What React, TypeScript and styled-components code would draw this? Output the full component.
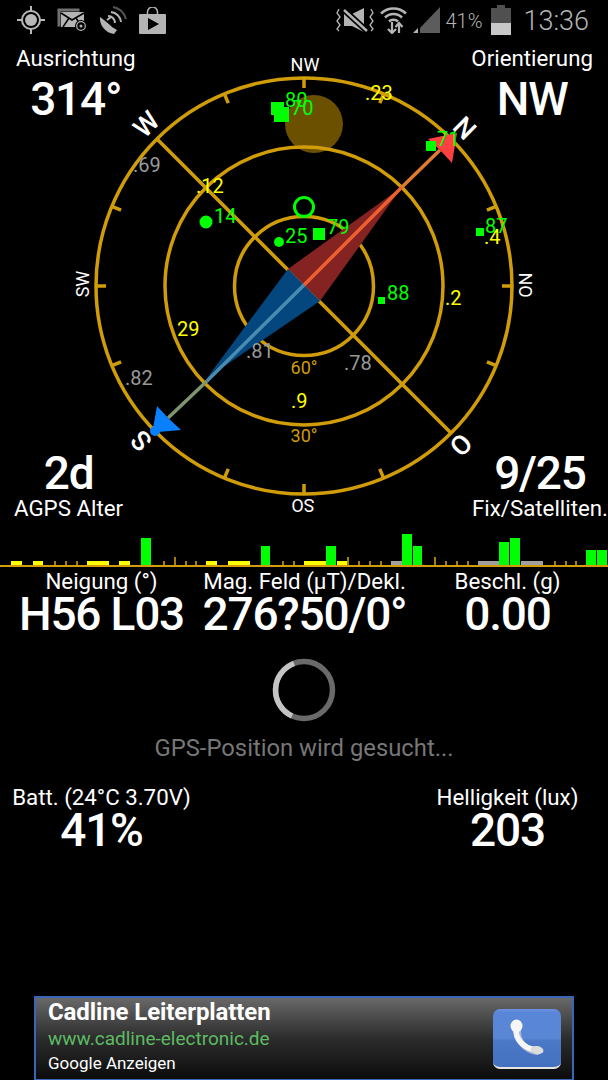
import React from 'react';
import styled, { createGlobalStyle } from 'styled-components';

const GOLD = '#d09c08';
const SAT_GREEN = '#00ff00';

const GlobalStyle = createGlobalStyle`
  html, body {
    margin: 0;
    padding: 0;
    background: #000;
  }
  body {
    font-family: Roboto, "Liberation Sans", sans-serif;
    color: #fff;
  }
`;

const Screen = styled.div`
  width: 608px;
  height: 1080px;
  background: #000;
  display: flex;
  flex-direction: column;
  overflow: hidden;
`;

const StatusBar = styled.div`
  height: 40px;
  flex: none;
  display: flex;
  align-items: center;
  justify-content: space-between;
  padding: 0 19px 0 17px;
  box-sizing: border-box;
  color: #b4b4b4;
`;

const IconGroup = styled.div<{ $gap: number }>`
  display: flex;
  align-items: center;
  gap: ${p => p.$gap}px;
`;

const Percent = styled.span`
  font-size: 20px;
  font-weight: 300;
  margin: 2px 3px 0 -1px;
`;

const Clock = styled.span`
  font-size: 27px;
  font-weight: 300;
  margin: 2px 0 0 6px;
`;

const Gauge = styled.section`
  position: relative;
  height: 485px;
  flex: none;
  display: flex;
  flex-direction: column;
  justify-content: space-between;
`;

const CompassSvg = styled.svg`
  position: absolute;
  left: 0;
  top: 0;
  font-family: Roboto, sans-serif;
`;

const CornerRow = styled.div<{ $left: number; $right: number; $top: number; $bottom: number }>`
  position: relative;
  display: flex;
  justify-content: space-between;
  padding: ${p => p.$top}px ${p => p.$right}px ${p => p.$bottom}px ${p => p.$left}px;
`;

const Stat = styled.div<{ $gap?: number }>`
  display: flex;
  flex-direction: column;
  align-items: center;
  gap: ${p => p.$gap ?? 0}px;
`;

const Label = styled.div`
  font-size: 22.3px;
  line-height: 26px;
  white-space: nowrap;
`;

const Value = styled.div<{ $line: number }>`
  font-size: 46px;
  font-weight: 500;
  line-height: ${p => p.$line}px;
  letter-spacing: -1.2px;
  white-space: nowrap;
`;

const SlotRow = styled.div`
  height: 40px;
  flex: none;
  display: grid;
  grid-template-columns: repeat(56, 1fr);
  align-items: end;
  border-bottom: 2px solid ${GOLD};
`;

const Slot = styled.div<{ $h: number; $color?: string; $tick?: boolean; $gapped?: boolean }>`
  box-sizing: border-box;
  height: ${p => p.$h}px;
  background: ${p => p.$color ?? 'transparent'};
  ${p => (p.$tick ? `border-left: 2px solid #a87e08;` : '')}
  ${p => (p.$gapped ? 'border-right: 1px solid #000;' : '')}
`;

const StatGrid = styled.div<{ $top: number }>`
  display: grid;
  grid-template-columns: repeat(3, 203px);
  margin-top: ${p => p.$top}px;
  justify-items: center;
`;

const Searching = styled.div`
  display: flex;
  flex-direction: column;
  align-items: center;
  margin-top: 23px;
  gap: 11px;
`;

const SearchText = styled.div`
  font-size: 23.8px;
  line-height: 28px;
  color: #777;
`;

const AdBanner = styled.aside`
  margin: auto 34px 0;
  height: 84px;
  box-sizing: border-box;
  border: 2px solid #3a66b8;
  border-bottom-width: 1px;
  background: linear-gradient(#686868 0%, #2c2c2c 50%, #0c0c0c 100%);
  display: flex;
  align-items: center;
  justify-content: space-between;
  padding: 0 11px 0 12px;
`;

const AdText = styled.div`
  display: flex;
  flex-direction: column;
  margin-top: -5px;
`;

const AdTitle = styled.div`
  font-size: 24px;
  font-weight: 700;
  line-height: 28px;
  letter-spacing: -0.1px;
`;

const AdUrl = styled.div`
  font-size: 19px;
  line-height: 26px;
  color: #5dbb63;
`;

const AdNote = styled.div`
  font-size: 17px;
  line-height: 23px;
`;

const CallButton = styled.div`
  width: 68px;
  height: 60px;
  border-radius: 7px;
  background: linear-gradient(#6a93e0 0%, #5a86d8 6%, #5a86d6 50%, #4c78c8 55%, #4470c0 100%);
  border-bottom: 2px solid #e4e4e4;
  box-sizing: border-box;
  display: flex;
  align-items: center;
  justify-content: center;
`;

// signal bars along the strip: 56 slots, one per satellite id
type SlotData = { h: number; color?: string; tick?: boolean };
const Y = '#ffff00';
const G = SAT_GREEN;
const A = '#a0a0a0';
const t = (h = 4): SlotData => ({ h, tick: true });
const bar = (h: number, color: string): SlotData => ({ h, color });
const e: SlotData = { h: 0 };
const slots: SlotData[] = [
  e, bar(4, Y), e, bar(4, Y), e, t(), t(), t(), bar(4, Y), bar(4, Y),
  e, bar(4, Y), e, bar(27, G), e, t(), t(8), t(), t(), bar(4, Y),
  e, bar(4, Y), bar(4, Y), e, bar(19, G), e, t(), t(), bar(4, Y), bar(4, Y),
  bar(19, G), bar(4, Y), t(8), t(), t(), t(), bar(4, A), bar(31, G), bar(19, G), e,
  t(8), t(), t(), t(), bar(4, A), bar(4, A), bar(23, G), bar(27, G), bar(4, A), bar(4, A),
  e, t(), t(), t(), bar(15, G), bar(15, G),
];

type Mark = { x: number; y: number; text: string; color?: string };
const marks: Mark[] = [
  { x: 285, y: 107, text: '80', color: G },
  { x: 291, y: 115, text: '70', color: G },
  { x: 437, y: 146, text: '71', color: G },
  { x: 485, y: 233, text: '87', color: G },
  { x: 327, y: 234, text: '79', color: G },
  { x: 285, y: 243, text: '25', color: G },
  { x: 214, y: 223, text: '14', color: G },
  { x: 387, y: 300, text: '88', color: G },
  { x: 196, y: 193, text: '.12', color: Y },
  { x: 365, y: 100, text: '.23', color: Y },
  { x: 177, y: 336, text: '29', color: Y },
  { x: 445, y: 305, text: '.2', color: Y },
  { x: 291, y: 408, text: '.9', color: Y },
  { x: 484, y: 244, text: '.4', color: Y },
  { x: 133, y: 172, text: '.69', color: '#999' },
  { x: 125, y: 385, text: '.82', color: '#999' },
  { x: 246, y: 358, text: '.81', color: '#999' },
  { x: 344, y: 370, text: '.78', color: '#999' },
];

const squares = [
  { x: 271, y: 102, s: 13 },
  { x: 274, y: 107, s: 15 },
  { x: 426, y: 141, s: 10 },
  { x: 476, y: 228, s: 8 },
  { x: 313, y: 228, s: 12 },
  { x: 378, y: 297, s: 7 },
];

const CX = 304;
const CY = 286;
const tickAngles = [0, 22.5, 67.5, 90, 112.5, 157.5, 180, 202.5, 247.5, 270, 292.5, 337.5];

const directions = [
  { text: 'NW', x: 305, y: 71, rot: 0, size: 18 },
  { text: 'NO', x: 525, y: 285, rot: 90, size: 18 },
  { text: 'SO', x: 303, y: 505, rot: 180, size: 18 },
  { text: 'SW', x: 83, y: 284, rot: -90, size: 18 },
  { text: 'N', x: 465, y: 128, rot: 45, size: 27 },
  { text: 'O', x: 461, y: 445, rot: 135, size: 27 },
  { text: 'S', x: 141, y: 441, rot: -135, size: 27 },
  { text: 'W', x: 146, y: 124, rot: -45, size: 27 },
];

const Compass = () => (
  <CompassSvg width="608" height="485" viewBox="0 40 608 485">
    <circle cx="314" cy="124" r="29" fill="#6b5000" />
    <g fill="none" stroke={GOLD} strokeWidth="3.5">
      <circle cx={CX} cy={CY} r="208" />
      <circle cx={CX} cy={CY} r="139" />
      <circle cx={CX} cy={CY} r="69.5" />
      <line x1="157" y1="139" x2="451" y2="433" />
      {tickAngles.map(a => (
        <line key={a} x1={CX} y1={CY - 208} x2={CX} y2={CY - 198} transform={`rotate(${a} ${CX} ${CY})`} />
      ))}
    </g>
    <polygon points="402,187 288,269 304,285" fill="#852222" />
    <polygon points="402,187 320,301 304,285" fill="#852222" />
    <polygon points="207,378 288,269 304,285" fill="#04477f" />
    <polygon points="207,378 320,301 304,285" fill="#04477f" />
    <line x1="440" y1="150" x2="402" y2="187" stroke="#e07a30" strokeWidth="3.5" />
    <line x1="402" y1="187" x2="304" y2="285" stroke="#ee6030" strokeWidth="3.5" />
    <line x1="304" y1="285" x2="207" y2="381" stroke="#4a8cb0" strokeWidth="3.5" />
    <line x1="207" y1="381" x2="168" y2="418" stroke="#7f9570" strokeWidth="3.5" />
    <polygon points="428,139 457,133 452,163 440,150" fill="#ff4040" />
    <polygon points="157,406 168,418 181,430 158,432 152,434" fill="#0a80ff" />
    <circle cx="155" cy="431" r="5" fill="#0a80ff" />
    {squares.map(s => (
      <rect key={`${s.x}-${s.y}`} x={s.x} y={s.y} width={s.s} height={s.s} fill={G} />
    ))}
    <circle cx="304" cy="207" r="9.5" fill="none" stroke={G} strokeWidth="3" />
    <circle cx="279" cy="242" r="5" fill={G} />
    <circle cx="206" cy="222" r="6.5" fill={G} />
    <g fontSize="20">
      {marks.map(m => (
        <text key={m.text} x={m.x} y={m.y} fill={m.color}>
          {m.text}
        </text>
      ))}
    </g>
    <g fontSize="18" fill={GOLD} textAnchor="middle">
      <text x="304" y="374">60°</text>
      <text x="304" y="442">30°</text>
    </g>
    <g fill="#fff" textAnchor="middle">
      {directions.map(d => (
        <text
          key={d.text}
          fontSize={d.size}
          fontWeight={d.size > 20 ? 500 : 400}
          transform={`translate(${d.x} ${d.y}) rotate(${d.rot})`}
          dy={d.rot === 0 ? 0 : d.size * 0.36}
        >
          {d.text}
        </text>
      ))}
    </g>
  </CompassSvg>
);

const GpsIcon = () => (
  <svg width="28" height="28" viewBox="0 0 28 28" fill="none" stroke="#b8b8b8" strokeWidth="2">
    <circle cx="14" cy="14" r="9" />
    <circle cx="14" cy="14" r="6" fill="#b8b8b8" stroke="none" />
    <path d="M14 0v6M14 22v6M0 14h6M22 14h6" />
  </svg>
);

const MailIcon = () => (
  <svg width="30" height="24" viewBox="0 0 30 24" fill="none">
    <path d="M0.500 0.500h22v3H3.500v15h-3z" fill="#707070" />
    <rect x="4" y="4" width="23" height="15" fill="#b4b4b4" />
    <path d="M4 5l11 7 12-7M6 19l6-9M25 19l-6-9" stroke="#000" strokeWidth="1.5" />
    <circle cx="24" cy="18" r="6" fill="#000" />
    <circle cx="24" cy="18" r="4.300" stroke="#b4b4b4" strokeWidth="1.200" />
    <circle cx="24" cy="18" r="1.500" fill="#b4b4b4" />
  </svg>
);

const DishIcon = () => (
  <svg width="28" height="28" viewBox="0 0 28 28" fill="none">
    <path d="M1 11a16 16 0 0 0 14 17l3-4-5-3-2-2-6-5z" fill="#b4b4b4" />
    <path d="M8 14l4-3" stroke="#b4b4b4" strokeWidth="2" />
    <path d="M9 10a7 7 0 0 1 7 7M12 6a11 11 0 0 1 10 10" stroke="#b4b4b4" strokeWidth="2" />
    <path d="M14 1a17 17 0 0 1 13 12" stroke="#555" strokeWidth="2" />
  </svg>
);

const StoreIcon = () => (
  <svg width="27" height="27" viewBox="0 0 27 27">
    <path d="M8.500 7V5a5 5 0 0 1 10 0v2" fill="none" stroke="#b4b4b4" strokeWidth="1.500" />
    <rect x="0" y="7" width="27" height="20" rx="1" fill="#b4b4b4" />
    <path d="M9 11l11 6-11 6z" fill="#000" />
  </svg>
);

const VibrateMuteIcon = () => (
  <svg width="38" height="24" viewBox="0 0 38 24" fill="none">
    <path d="M8 6h8l12-6v24l-12-6H8z" fill="#b4b4b4" />
    <path d="M7 1l24 22" stroke="#000" strokeWidth="6" />
    <path d="M8 2l23 21" stroke="#b4b4b4" strokeWidth="2.500" />
    <path d="M3 1L1 5l3 4-3 4 3 4-3 4 2 2M35 1l2 4-3 4 3 4-3 4 3 4-2 2" stroke="#b4b4b4" strokeWidth="1.300" />
  </svg>
);

const WifiIcon = () => (
  <svg width="27" height="28" viewBox="0 0 27 28" fill="none" stroke="#b4b4b4">
    <path d="M1 7.500a18 18 0 0 1 25 0" strokeWidth="2.600" />
    <path d="M5 11.500a12 12 0 0 1 17 0" strokeWidth="2.600" />
    <path d="M9 15.500a6.500 6.500 0 0 1 9 0" strokeWidth="2.600" />
    <path d="M12 16v11M8 23l4 4 4-4M19 27V17M15.500 21l3.500-4 3.500 4" strokeWidth="2.200" />
  </svg>
);

const SignalIcon = () => (
  <svg width="27" height="26" viewBox="0 0 27 26">
    <path d="M27 0v26H7v-5z" fill="#5c5c5c" />
    <path d="M5 21v5H0z" fill="#b4b4b4" />
  </svg>
);

const BatteryIcon = () => (
  <svg width="20" height="30" viewBox="0 0 20 30">
    <rect x="6" y="0" width="8" height="3" fill="#505050" />
    <rect x="0" y="3" width="20" height="15" fill="#505050" />
    <rect x="0" y="18" width="20" height="12" fill="#c8c8c8" />
  </svg>
);

const Spinner = () => (
  <svg width="66" height="66" viewBox="0 0 66 66" fill="none" strokeWidth="5.5">
    <circle cx="33" cy="33" r="28.5" stroke="#6a6a6a" />
    <path d="M23 6.500A28.500 28.500 0 0 0 21 59" stroke="#c4c4c4" />
  </svg>
);

const PhoneIcon = () => (
  <svg width="36" height="38" viewBox="0 0 36 38" fill="none">
    <path d="M9 10C8 21 15 31 28 33" stroke="#aeb9d2" strokeWidth="6" strokeLinecap="round" />
    <path d="M7 9C6 20 14 29 27 31" stroke="#f6f6f6" strokeWidth="5.500" strokeLinecap="round" />
    <ellipse cx="7.500" cy="7" rx="6" ry="6.500" fill="#f6f6f6" />
    <ellipse cx="28" cy="31" rx="6.500" ry="4" fill="#dcdcdc" transform="rotate(10 28 31)" />
  </svg>
);

export default function App() {
  return (
    <Screen>
      <GlobalStyle />
      <StatusBar>
        <IconGroup $gap={12}>
          <GpsIcon />
          <MailIcon />
          <DishIcon />
          <StoreIcon />
        </IconGroup>
        <IconGroup $gap={6}>
          <VibrateMuteIcon />
          <WifiIcon />
          <SignalIcon />
          <Percent>41%</Percent>
          <BatteryIcon />
          <Clock>13:36</Clock>
        </IconGroup>
      </StatusBar>

      <Gauge>
        <Compass />
        <CornerRow $left={16} $right={15} $top={5} $bottom={0}>
          <Stat $gap={3}>
            <Label>Ausrichtung</Label>
            <Value $line={50}>314°</Value>
          </Stat>
          <Stat $gap={3}>
            <Label>Orientierung</Label>
            <Value $line={50}>NW</Value>
          </Stat>
        </CornerRow>
        <CornerRow $left={14} $right={0} $top={0} $bottom={4}>
          <Stat>
            <Value $line={44}>2d</Value>
            <Label>AGPS Alter</Label>
          </Stat>
          <Stat>
            <Value $line={44}>9/25</Value>
            <Label>Fix/Satelliten.</Label>
          </Stat>
        </CornerRow>
      </Gauge>

      <SlotRow>
        {slots.map((s, i) => (
          <Slot key={i} $h={s.h} $color={s.color} $tick={s.tick} $gapped={s.color === G} />
        ))}
      </SlotRow>

      <StatGrid $top={1}>
        <Stat>
          <Label>Neigung (°)</Label>
          <Value $line={40}>H56 L03</Value>
        </Stat>
        <Stat>
          <Label>Mag. Feld (µT)/Dekl.</Label>
          <Value $line={40}>276?50/0°</Value>
        </Stat>
        <Stat>
          <Label>Beschl. (g)</Label>
          <Value $line={40}>0.00</Value>
        </Stat>
      </StatGrid>

      <Searching>
        <Spinner />
        <SearchText>GPS-Position wird gesucht...</SearchText>
      </Searching>

      <StatGrid $top={22}>
        <Stat>
          <Label>Batt. (24°C 3.70V)</Label>
          <Value $line={40}>41%</Value>
        </Stat>
        <span />
        <Stat>
          <Label>Helligkeit (lux)</Label>
          <Value $line={40}>203</Value>
        </Stat>
      </StatGrid>

      <AdBanner>
        <AdText>
          <AdTitle>Cadline Leiterplatten</AdTitle>
          <AdUrl>www.cadline-electronic.de</AdUrl>
          <AdNote>Google Anzeigen</AdNote>
        </AdText>
        <CallButton>
          <PhoneIcon />
        </CallButton>
      </AdBanner>
    </Screen>
  );
}
